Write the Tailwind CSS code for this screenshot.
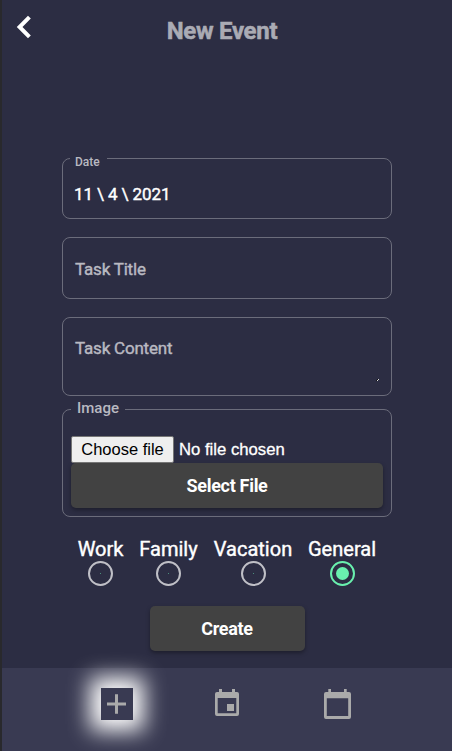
<!DOCTYPE html>
<html lang="en">
<head>
<meta charset="utf-8">
<title>New Event</title>
<script src="https://cdn.jsdelivr.net/npm/@tailwindcss/browser@4"></script>
</head>
<body class="h-[751px] w-[452px] overflow-hidden bg-[#2c2d43] font-['Roboto',sans-serif] text-white">
<div class="flex h-full flex-col border-l-2 border-[#29292d]">
  <header class="relative flex h-[158px] shrink-0 justify-center pt-[17px]">
    <svg class="absolute left-[14px] top-[15px] h-6 w-4" viewBox="0 0 16 24" fill="none" stroke="#fff" stroke-width="4"><path d="M13.400 2.200 3.600 12l9.800 9.800"/></svg>
    <h1 class="ml-[-10px] text-2xl leading-7 font-bold tracking-[-0.3px] text-[#aaabb4] [-webkit-text-stroke:0.5px_#aaabb4]">New Event</h1>
  </header>
  <form class="ml-[60px] flex w-[330px] shrink-0 flex-col">
    <div class="relative h-[61px] rounded-lg border border-[#6b6c7b] pt-[24px] pl-[11px]">
      <span class="absolute left-[7px] top-[-4px] bg-[#2c2d43] pr-[7px] pl-[5px] text-xs leading-[14px] font-medium text-[#b9b9c1]">Date</span>
      <div class="text-[17px] leading-[22px] tracking-[-0.1px] whitespace-nowrap [-webkit-text-stroke:0.4px_#fff]">11 \ 4 \ 2021</div>
    </div>
    <div class="mt-[18px] h-[62px] rounded-lg border border-[#6b6c7b] pt-[20px] pl-[12px] text-[17px] leading-[22px] tracking-[-0.2px] text-[#b9b9c1] [-webkit-text-stroke:0.4px_#b9b9c1]">Task Title</div>
    <div class="relative mt-[18px] h-[79px] rounded-lg border border-[#6b6c7b] pt-[19px] pl-[12px] text-[17px] leading-[22px] tracking-[-0.2px] text-[#b9b9c1] [-webkit-text-stroke:0.4px_#b9b9c1]">Task Content
      <svg class="absolute right-[12px] bottom-[13px] size-[3px]" viewBox="0 0 3 3"><path d="M0 1h1v1H0zM1 0h1v1H1z" fill="#111"/><path d="M2 0h1v1H2zM1 1h1v1H1z" fill="#ddd"/></svg>
    </div>
    <div class="relative mt-[13px] h-[108px] rounded-lg border border-[#6b6c7b] px-2 pt-[26px]">
      <span class="absolute left-[8px] top-[-11px] bg-[#2c2d43] px-[6px] text-[15px] leading-[18px] font-medium text-[#b9b9c1]">Image</span>
      <div class="flex h-[27px] items-center">
        <div class="flex h-[27px] w-[103px] items-center justify-center rounded-[2px] border border-[#767676] bg-[#efefef] font-['Liberation_Sans',sans-serif] text-[16.5px] text-black">Choose file</div>
        <span class="ml-[5px] font-['Liberation_Sans',sans-serif] text-[16.7px] [-webkit-text-stroke:0.3px_#fff]">No file chosen</span>
      </div>
      <div class="flex h-[45px] items-center justify-center rounded-[5px] bg-[#424242] text-lg font-bold tracking-[-0.3px] shadow-[0_2px_4px_rgba(0,0,0,0.35)]">Select File</div>
    </div>
    <div class="mt-[21px] ml-[16px] flex gap-4 text-xl leading-[23px] [-webkit-text-stroke:0.4px_#fff]">
      <div class="flex w-[45px] flex-col items-center"><span>Work</span><i class="flex size-[25px] items-center justify-center rounded-full border-2 border-[#c0c0c7]"><b class="size-px bg-[#4a8d7c]"></b></i></div>
      <div class="flex w-[59px] flex-col items-center"><span>Family</span><i class="flex size-[25px] items-center justify-center rounded-full border-2 border-[#c0c0c7]"><b class="size-px bg-[#4a8d7c]"></b></i></div>
      <div class="flex w-[78px] flex-col items-center"><span>Vacation</span><i class="flex size-[25px] items-center justify-center rounded-full border-2 border-[#c0c0c7]"><b class="size-px bg-[#4a8d7c]"></b></i></div>
      <div class="flex w-[68px] flex-col items-center"><span>General</span><i class="flex size-[25px] items-center justify-center rounded-full border-2 border-[#69f0ae]"><b class="size-[13px] rounded-full bg-[#69f0ae]"></b></i></div>
    </div>
    <div class="mt-5 ml-[88px] flex h-[45px] w-[155px] items-center justify-center rounded-[5px] bg-[#424242] pr-px text-lg font-bold tracking-[-0.3px] shadow-[0_2px_4px_rgba(0,0,0,0.35)]">Create</div>
  </form>
  <nav class="mt-[17px] flex h-[83px] shrink-0 bg-[#393a52] pt-5 pl-[99px]">
    <div class="size-8 bg-[#393a52] shadow-[0_0_22px_11px_#fff]">
      <svg class="size-8" viewBox="0 0 32 32" fill="#aaa"><path d="M14 6.300h3v8.200h8v3h-8v8.300h-3v-8.300H6v-3h8z"/></svg>
    </div>
    <svg class="ml-[82px] h-8 w-6" viewBox="0 0 24 32" fill="#aaa"><path fill-rule="evenodd" d="M4 1h3v3h10V1h3v3H22a2 2 0 0 1 2 2v20a2 2 0 0 1-2 2H2a2 2 0 0 1-2-2V6a2 2 0 0 1 2-2h2zM2.700 10v15.300h18.600V10zM12 16h7v7h-7z"/></svg>
    <svg class="ml-[85px] h-8 w-7" viewBox="0 0 28 32" fill="#aaa"><path fill-rule="evenodd" d="M4.300 1h2.700v3h13V1h2.700v3h2.300a2 2 0 0 1 2 2v23a2 2 0 0 1-2 2h-23a2 2 0 0 1-2-2V6a2 2 0 0 1 2-2H4.300zM2.800 10.300V28h21.400V10.300z"/></svg>
  </nav>
</div>
</body>
</html>
